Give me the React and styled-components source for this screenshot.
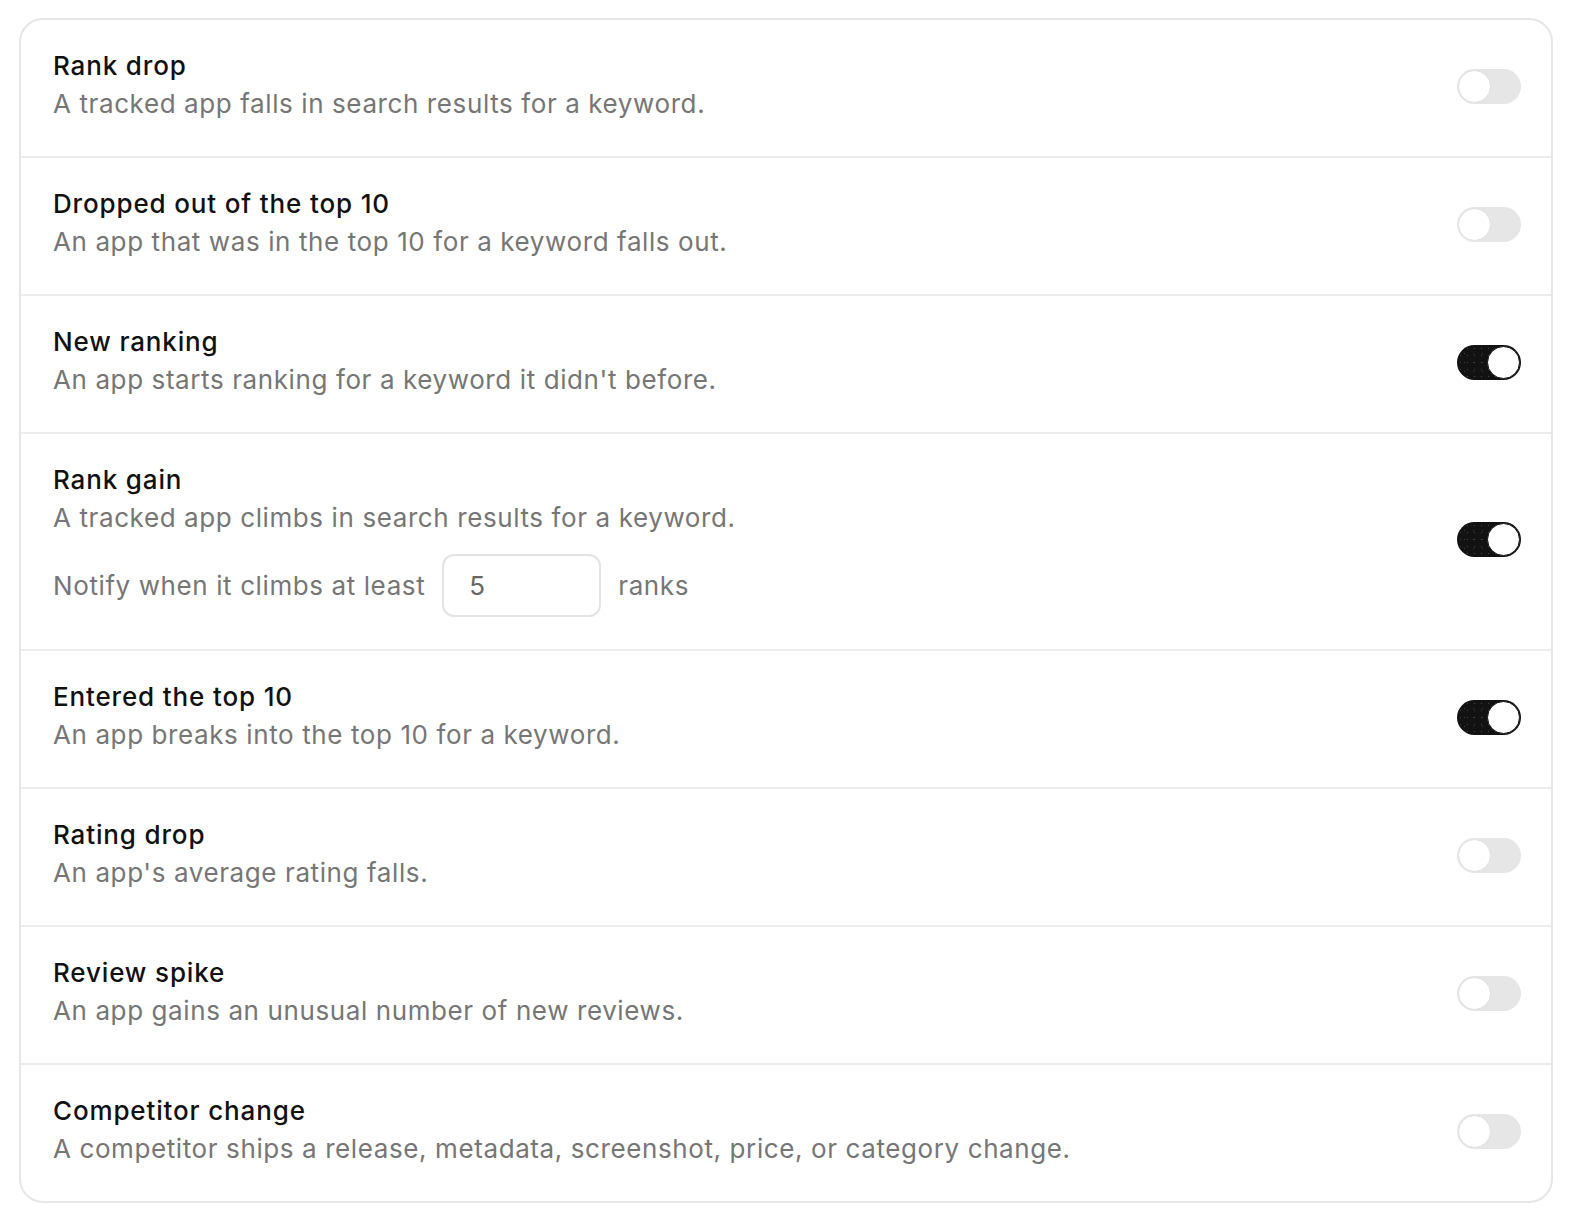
import { useState } from "react";
import styled, { createGlobalStyle } from "styled-components";

const GlobalStyle = createGlobalStyle`
  * { box-sizing: border-box; }
  html, body {
    margin: 0;
    background: #ffffff;
    font-family: Inter, "Noto Sans", "Liberation Sans", sans-serif;
    -webkit-font-smoothing: antialiased;
  }
`;

const Page = styled.div`
  padding: 18px 19px 18px 19px;
`;

const Card = styled.div`
  border: 2px solid #e6e6e6;
  border-radius: 24px;
  background: #fff;
  overflow: hidden;
`;

const Row = styled.div`
  display: flex;
  align-items: center;
  justify-content: space-between;
  padding: 28px 30px 32px 32px;
  border-top: ${(p) => (p.$first ? "none" : "2px solid #ececec")};
`;

const Text = styled.div`
  display: flex;
  flex-direction: column;
`;

const Title = styled.div`
  font-size: 26px;
  line-height: 36px;
  color: #111;
  font-weight: 500;
  letter-spacing: 0.85px;
`;

const Desc = styled.div`
  font-size: 26px;
  line-height: 40px;
  color: #767676;
  letter-spacing: 0.6px;
`;

const Threshold = styled.div`
  display: flex;
  align-items: center;
  gap: 17px;
  margin-top: 16px;
  font-size: 26px;
  letter-spacing: 0.6px;
  color: #767676;
`;

const NumInput = styled.input`
  width: 159px;
  height: 63px;
  border: 2px solid #e3e3e3;
  border-radius: 12px;
  padding: 0 25px;
  font-family: inherit;
  font-size: 26px;
  color: #666;
  outline: none;
  background: #fff;
`;

const Track = styled.button`
  position: relative;
  flex: none;
  width: 64px;
  height: 35px;
  border: none;
  border-radius: 18px;
  padding: 0;
  cursor: pointer;
  background-color: ${(p) => (p.$on ? "#121212" : "#e6e6e6")};
  background-image: ${(p) =>
    p.$on
      ? "radial-gradient(rgba(255,255,255,0.22) 0.6px, transparent 0.9px), radial-gradient(rgba(255,255,255,0.18) 0.6px, transparent 0.9px)"
      : "none"};
  background-size: 7px 7px, 9px 9px;
  background-position: 0 0, 3px 4px;
`;

const Knob = styled.span`
  position: absolute;
  top: 1px;
  left: ${(p) => (p.$on ? "30px" : "1px")};
  width: 33px;
  height: 33px;
  border-radius: 50%;
  background: #fff;
  border: 1.5px solid ${(p) => (p.$on ? "#121212" : "#e0e0e0")};
`;

const Toggle = ({ on, onClick }) => (
  <Track $on={on} onClick={onClick} aria-pressed={on}>
    <Knob $on={on} />
  </Track>
);

const initial = [
  { title: "Rank drop", desc: "A tracked app falls in search results for a keyword.", on: false },
  { title: "Dropped out of the top 10", desc: "An app that was in the top 10 for a keyword falls out.", on: false },
  { title: "New ranking", desc: "An app starts ranking for a keyword it didn't before.", on: true },
  { title: "Rank gain", desc: "A tracked app climbs in search results for a keyword.", on: true, threshold: true },
  { title: "Entered the top 10", desc: "An app breaks into the top 10 for a keyword.", on: true },
  { title: "Rating drop", desc: "An app's average rating falls.", on: false },
  { title: "Review spike", desc: "An app gains an unusual number of new reviews.", on: false },
  { title: "Competitor change", desc: "A competitor ships a release, metadata, screenshot, price, or category change.", on: false },
];

export default function App() {
  const [items, setItems] = useState(initial);
  const [climb, setClimb] = useState("5");

  const flip = (i) =>
    setItems((list) => list.map((it, j) => (j === i ? { ...it, on: !it.on } : it)));

  return (
    <Page>
      <GlobalStyle />
      <Card>
        {items.map((it, i) => (
          <Row key={it.title} $first={i === 0}>
            <Text>
              <Title>{it.title}</Title>
              <Desc>{it.desc}</Desc>
              {it.threshold && it.on && (
                <Threshold>
                  Notify when it climbs at least
                  <NumInput value={climb} onChange={(e) => setClimb(e.target.value)} />
                  ranks
                </Threshold>
              )}
            </Text>
            <Toggle on={it.on} onClick={() => flip(i)} />
          </Row>
        ))}
      </Card>
    </Page>
  );
}
